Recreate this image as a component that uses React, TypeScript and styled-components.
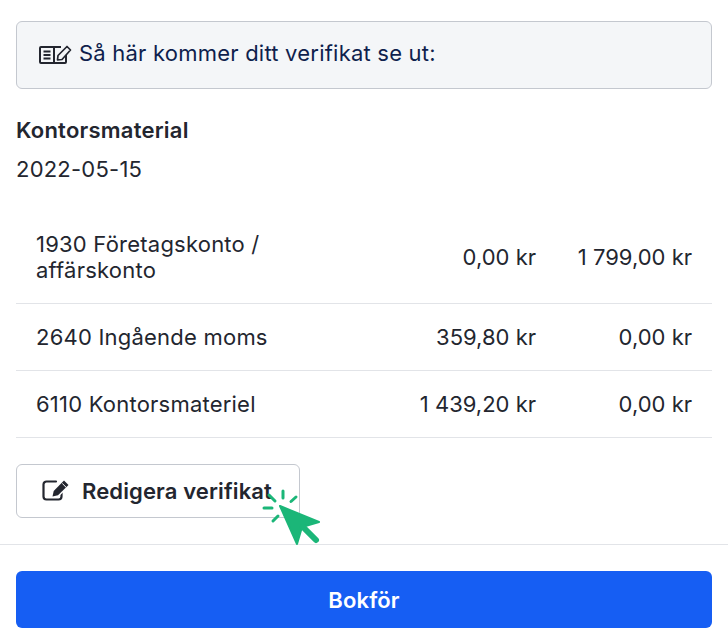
import { createGlobalStyle, styled } from 'styled-components';

const GlobalStyle = createGlobalStyle`
    html, body {
        margin: 0;
        padding: 0;
        background: #ffffff;
    }
    body {
        font-family: Inter, "Liberation Sans", sans-serif;
        color: #23262f;
        letter-spacing: 0.22px;
    }
`;

const Page = styled.div`
    width: 728px;
    height: 643px;
    padding-top: 21px;
    box-sizing: border-box;
    overflow: hidden;
`;

const Section = styled.div`
    padding: 0 16px;
`;

const Notice = styled.div`
    display: flex;
    align-items: center;
    gap: 7px;
    height: 68px;
    box-sizing: border-box;
    padding: 0 0 4px 21px;
    background: #f4f6f8;
    border: 1px solid #c4c8cf;
    border-radius: 6px;
    color: #0f1f4d;
    font-size: 22px;
`;

const NoticeIcon = styled.svg`
    flex: none;
    margin-top: 4px;
`;

const Title = styled.div`
    margin-top: 28px;
    font-size: 22px;
    line-height: 26px;
    font-weight: 600;
`;

const DateLine = styled.div`
    margin-top: 13px;
    font-size: 22px;
    line-height: 26px;
`;

const Rows = styled.div`
    margin-top: 29px;
`;

const Row = styled.div<{ $tall?: boolean }>`
    display: grid;
    grid-template-columns: 1fr 160px 156px;
    align-items: center;
    height: ${p => (p.$tall ? 93 : 67)}px;
    padding: 0 20px;
    box-sizing: border-box;
    border-bottom: 1px solid #e2e4e8;
    font-size: 22px;
    line-height: 26px;
`;

const Account = styled.div`
    width: 280px;
`;

const Amount = styled.div`
    text-align: right;
    letter-spacing: 0;
`;

const ButtonWrap = styled.div`
    position: relative;
    width: 284px;
    margin-top: 26px;
`;

const EditButton = styled.button`
    display: flex;
    align-items: center;
    gap: 12px;
    width: 284px;
    height: 54px;
    padding: 0 0 0 25px;
    box-sizing: border-box;
    background: #ffffff;
    border: 1px solid #c4c8cf;
    border-radius: 6px;
    color: #23262f;
    font-family: inherit;
    font-size: 22px;
    letter-spacing: 0.13px;
    font-weight: 600;
`;

const Cursor = styled.svg`
    position: absolute;
    left: 245px;
    top: 23px;
`;

const Footer = styled.div`
    margin-top: 26px;
    border-top: 1px solid #e2e4e8;
    padding: 26px 16px 0;
`;

const SubmitButton = styled.button`
    display: block;
    width: 100%;
    height: 57px;
    background: #165ef3;
    border: none;
    border-radius: 6px;
    color: #ffffff;
    font-family: inherit;
    font-size: 22px;
    letter-spacing: 0.13px;
    font-weight: 600;
`;

function BookEditIcon() {
    return (
        <NoticeIcon width="34" height="22" viewBox="0 0 34 22" fill="none" stroke="#23262f" strokeWidth="2">
            <path d="M23 3H3a1 1 0 0 0-1 1v14a1 1 0 0 0 1 1h24a1 1 0 0 0 1-1v-7" />
            <path d="M16 3v16" />
            <path d="M5.500 7.500h7M5.500 11h7M5.500 14.500h7" strokeWidth="1.800" />
            <path d="M19.500 16l.5-4.500L29 2.500l3.500 3.500-8.500 9.500z" strokeWidth="1.700" strokeLinejoin="round" fill="#f4f6f8" />
        </NoticeIcon>
    );
}

function PencilIcon() {
    return (
        <svg width="28" height="24" viewBox="0 0 28 24" fill="none">
            <path d="M14 2.500H4.500a3 3 0 0 0-3 3v12a3 3 0 0 0 3 3h12a3 3 0 0 0 3-3V12" stroke="#23262f" strokeWidth="2.200" strokeLinecap="round" />
            <path d="M10.500 17.500l1.200-5.500L22 1.500l4.500 4.500L16 16.300z" fill="#23262f" stroke="#ffffff" strokeWidth="3" strokeLinejoin="round" paintOrder="stroke" />
            <path d="M20.300 4.500l3.700 3.700" stroke="#ffffff" strokeWidth="1" />
        </svg>
    );
}

function ClickCursor() {
    return (
        <Cursor width="64" height="64" viewBox="0 0 64 64" fill="none">
            <path d="M19 19L58 35L41 40L36 57Z" fill="#1bb678" stroke="#1bb678" strokeWidth="2" strokeLinejoin="round" />
            <path d="M42 40L55 53" stroke="#1bb678" strokeWidth="6" strokeLinecap="round" />
            <g stroke="#1bb678" strokeWidth="3" strokeLinecap="round">
                <path d="M8 8l6 6" />
                <path d="M22 4v7" />
                <path d="M35 10l-5 4.500" />
                <path d="M3 21h8" />
                <path d="M12 34l5-5" />
            </g>
        </Cursor>
    );
}

export default function App() {
    return (
        <Page>
            <GlobalStyle />
            <Section>
                <Notice>
                    <BookEditIcon />
                    Så här kommer ditt verifikat se ut:
                </Notice>
                <Title>Kontorsmaterial</Title>
                <DateLine>2022-05-15</DateLine>
                <Rows>
                    <Row $tall>
                        <Account>1930 Företagskonto / affärskonto</Account>
                        <Amount>0,00 kr</Amount>
                        <Amount>1 799,00 kr</Amount>
                    </Row>
                    <Row>
                        <Account>2640 Ingående moms</Account>
                        <Amount>359,80 kr</Amount>
                        <Amount>0,00 kr</Amount>
                    </Row>
                    <Row>
                        <Account>6110 Kontorsmateriel</Account>
                        <Amount>1 439,20 kr</Amount>
                        <Amount>0,00 kr</Amount>
                    </Row>
                </Rows>
                <ButtonWrap>
                    <EditButton>
                        <PencilIcon />
                        Redigera verifikat
                    </EditButton>
                    <ClickCursor />
                </ButtonWrap>
            </Section>
            <Footer>
                <SubmitButton>Bokför</SubmitButton>
            </Footer>
        </Page>
    );
}
